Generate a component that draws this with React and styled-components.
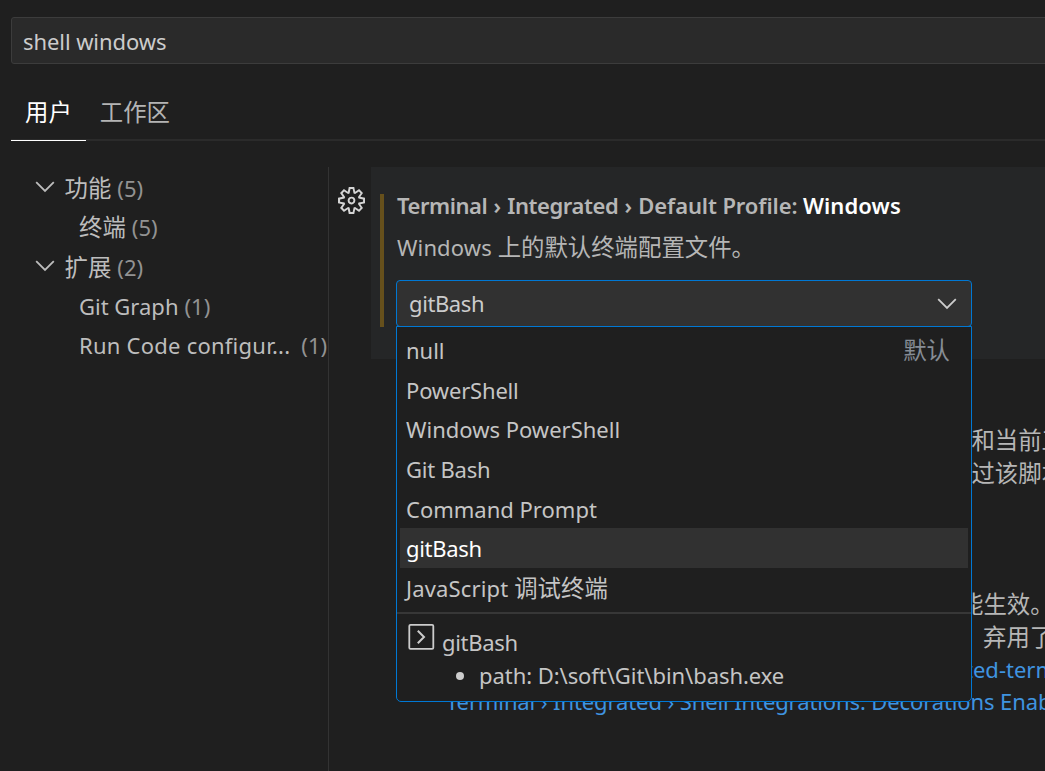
import React from "react";
import styled, { createGlobalStyle } from "styled-components";
import { VscSettingsGear } from "react-icons/vsc";

const GlobalStyle = createGlobalStyle`
  *, *::before, *::after { box-sizing: border-box; }
  body {
    margin: 0;
    background: #1f1f1f;
    overflow: hidden;
  }
`;

const Page = styled.div`
  width: 100vw;
  height: 100vh;
  overflow: hidden;
  display: flex;
  flex-direction: column;
  padding: 17px 0 0 11px;
  background: #1f1f1f;
  color: #cccccc;
  font-family: "Noto Sans", "Noto Sans CJK SC", sans-serif;
  font-size: 22px;
  line-height: 32px;
  white-space: nowrap;
`;

const Cjk = styled.span`
  font-family: "Noto Sans CJK SC", sans-serif;
  font-size: 23.4px;
  line-height: 1;
  letter-spacing: 0;
`;

const Latin = styled.span`
  letter-spacing: ${(p) => p.$track || 0}px;
`;

const SearchBox = styled.div`
  flex: none;
  height: 47px;
  padding: 8px 11px;
  margin-right: -4px;
  border: 1px solid #3c3c3c;
  border-radius: 3px;
  background: #2a2a2a;
  line-height: 31px;
  letter-spacing: -0.08px;
`;

const Tabs = styled.div`
  flex: none;
  display: flex;
  height: 50px;
  margin-top: 27px;
  border-bottom: 2px solid #2b2b2b;
`;

const Tab = styled.div`
  height: 50px;
  padding: 5px 14px;
  color: ${(p) => (p.$active ? "#ffffff" : "#b4b4b4")};
  border-bottom: 1px solid ${(p) => (p.$active ? "#ffffff" : "transparent")};
`;

const Body = styled.div`
  flex: 1;
  min-height: 0;
  display: flex;
  margin-top: 26px;
`;

const Tree = styled.div`
  flex: none;
  width: 318px;
  padding-top: 1.3px;
  border-right: 1px solid #333333;
  color: #bdbdbd;
`;

const TreeRow = styled.div`
  display: flex;
  align-items: center;
  height: 39.3px;
  padding-left: ${(p) => (p.$nested ? 68 : 24)}px;

  svg {
    margin-top: -2px;
  }
`;

const TreeLabel = styled.span`
  margin-left: ${(p) => (p.$nested ? 0 : 9.5)}px;
  letter-spacing: ${(p) => p.$track || 0}px;
`;

const Count = styled.span`
  margin-left: ${(p) => p.$gap || 6}px;
  color: #929292;
`;

const GearColumn = styled.div`
  flex: none;
  width: 42px;
  padding: 20px 0 0 9px;
  color: #d4d4d4;
`;

const Settings = styled.div`
  flex: 1;
  min-width: 0;
`;

const ActiveSetting = styled.section`
  display: flex;
  height: 192px;
  padding: 27px 0 0 9px;
  background: #252627;
`;

const ModifiedBar = styled.div`
  flex: none;
  width: 4px;
  height: 133px;
  background: #66501c;
`;

const SettingContent = styled.div`
  width: 576px;
  margin-left: 12px;
  color: #b6b6b6;
`;

const Title = styled.div`
  display: flex;
  height: 24px;
  padding-left: 1px;
  line-height: 22px;
  font-weight: 600;
`;

const TitleArrow = styled.span`
  width: 20px;
  text-align: center;
`;

const TitleKey = styled.span`
  margin-left: 5.5px;
  letter-spacing: 0.1px;
  color: #ffffff;
`;

const Description = styled.div`
  height: 32px;
  margin-top: 13px;
  padding-left: 1px;
`;

const SelectAnchor = styled.div`
  position: relative;
  margin-top: 17px;
`;

const SelectBox = styled.div`
  display: flex;
  align-items: center;
  justify-content: space-between;
  height: 47px;
  padding: 0 14px 1px 12px;
  border: 1px solid #0078d4;
  border-radius: 4px;
  background: #313131;
  color: #cccccc;
`;

const Menu = styled.div`
  position: absolute;
  z-index: 2;
  top: 46px;
  left: 0;
  width: 576px;
  height: 376px;
  border: 1px solid #0078d4;
  border-radius: 0 0 5px 5px;
  background: #1f1f1f;
  color: #c5c5c5;
`;

const Options = styled.div`
  height: 287px;
  padding: 3px 3px 0;
  border-bottom: 2px solid #373737;
`;

const Option = styled.div`
  display: flex;
  align-items: center;
  justify-content: space-between;
  height: 39.7px;
  padding: 0 18px 0 6px;
  background: ${(p) => (p.$active ? "#313131" : "transparent")};
  color: ${(p) => (p.$active ? "#ffffff" : "inherit")};
`;

const OptionNote = styled.span`
  margin-top: 1px;
  color: #868d96;
`;

const Details = styled.div`
  padding: 10px 0 0 11px;
`;

const DetailHead = styled.div`
  display: flex;
  align-items: flex-start;
  gap: 7px;
`;

const DetailName = styled.span`
  padding-top: 2px;
  letter-spacing: -0.3px;
`;

const DetailItem = styled.div`
  display: flex;
  align-items: center;
  gap: 14px;
  height: 32px;
  margin: 1px 0 0 47px;
`;

const Bullet = styled.span`
  width: 8px;
  height: 8px;
  margin: 1px 1px 0 1px;
  border-radius: 50%;
  background: #cccccc;
`;

const Paragraph = styled.div`
  margin-top: ${(p) => p.$top}px;
  color: #b6b6b6;
`;

const Line = styled.div`
  height: 33px;
  line-height: 33px;
  padding-left: ${(p) => p.$indent}px;
`;

const LinkLine = styled(Line)`
  height: 32px;
  line-height: 31px;
  color: #3f94e0;
  letter-spacing: ${(p) => p.$track || 0}px;
`;

const Chevron = () => (
  <svg width="20" height="13" viewBox="0 0 20 13" fill="none">
    <path d="M1.2 2.2 10 11 18.8 2.2" stroke="currentColor" strokeWidth="1.8" />
  </svg>
);

const TerminalIcon = () => (
  <svg width="27" height="27" viewBox="0 0 27 27" fill="none">
    <rect x="1.3" y="0.9" width="24" height="24" rx="1.2" stroke="#cccccc" strokeWidth="1.8" />
    <path d="M9.8 6.8 16 13 9.8 19.2" stroke="#cccccc" strokeWidth="2" />
  </svg>
);

const options = [
  { label: "null", note: "默认" },
  { label: "PowerShell", track: -0.18 },
  { label: "Windows PowerShell" },
  { label: "Git Bash", track: -0.22 },
  { label: "Command Prompt" },
  { label: "gitBash", active: true, track: -0.3 },
  { label: "JavaScript ", cjk: "调试终端", track: 0.16 },
];

export default function App() {
  return (
    <>
      <GlobalStyle />
      <Page>
        <SearchBox>shell windows</SearchBox>
        <Tabs>
          <Tab $active><Cjk>用户</Cjk></Tab>
          <Tab><Cjk>工作区</Cjk></Tab>
        </Tabs>
        <Body>
          <Tree>
            <TreeRow><Chevron /><TreeLabel><Cjk>功能</Cjk></TreeLabel><Count>(5)</Count></TreeRow>
            <TreeRow $nested><TreeLabel $nested><Cjk>终端</Cjk></TreeLabel><Count>(5)</Count></TreeRow>
            <TreeRow><Chevron /><TreeLabel><Cjk>扩展</Cjk></TreeLabel><Count>(2)</Count></TreeRow>
            <TreeRow $nested><TreeLabel $nested>Git Graph</TreeLabel><Count>(1)</Count></TreeRow>
            <TreeRow $nested><TreeLabel $nested $track={0.24}>Run Code configur...</TreeLabel><Count $gap={11}>(1)</Count></TreeRow>
          </Tree>
          <GearColumn><VscSettingsGear size={27} /></GearColumn>
          <Settings>
            <ActiveSetting>
              <ModifiedBar />
              <SettingContent>
                <Title>
                  <Latin $track={-0.46}>Terminal</Latin>
                  <TitleArrow>›</TitleArrow>
                  <Latin $track={-0.42}>Integrated</Latin>
                  <TitleArrow>›</TitleArrow>
                  <Latin $track={-0.1}>Default Profile:</Latin>
                  <TitleKey>Windows</TitleKey>
                </Title>
                <Description><Latin $track={0.12}>Windows </Latin><Cjk>上的默认终端配置文件。</Cjk></Description>
                <SelectAnchor>
                  <SelectBox><Latin $track={-0.4}>gitBash</Latin><Chevron /></SelectBox>
                  <Menu>
                    <Options>
                      {options.map((o, i) => (
                        <Option key={i} $active={o.active}>
                          <Latin $track={o.track}>{o.label}{o.cjk && <Cjk>{o.cjk}</Cjk>}</Latin>
                          {o.note && <OptionNote><Cjk>{o.note}</Cjk></OptionNote>}
                        </Option>
                      ))}
                    </Options>
                    <Details>
                      <DetailHead><TerminalIcon /><DetailName>gitBash</DetailName></DetailHead>
                      <DetailItem><Bullet /><Latin $track={-0.06}>path: D:\soft\Git\bin\bash.exe</Latin></DetailItem>
                    </Details>
                  </Menu>
                </SelectAnchor>
              </SettingContent>
            </ActiveSetting>
            <Paragraph $top={65}>
              <Line $indent={577}><Cjk>器和当前工作区</Cjk></Line>
              <Line $indent={577}><Cjk>通过该脚本</Cjk></Line>
            </Paragraph>
            <Paragraph $top={98}>
              <Line $indent={589}><Cjk>能生效。</Cjk></Line>
              <Line $indent={612}><Cjk>弃用了</Cjk></Line>
              <LinkLine $indent={594}>ted-terminal</LinkLine>
              <LinkLine $indent={75} $track={-0.11}>Terminal › Integrated › Shell Integrations: Decorations Enabled</LinkLine>
            </Paragraph>
          </Settings>
        </Body>
      </Page>
    </>
  );
}
